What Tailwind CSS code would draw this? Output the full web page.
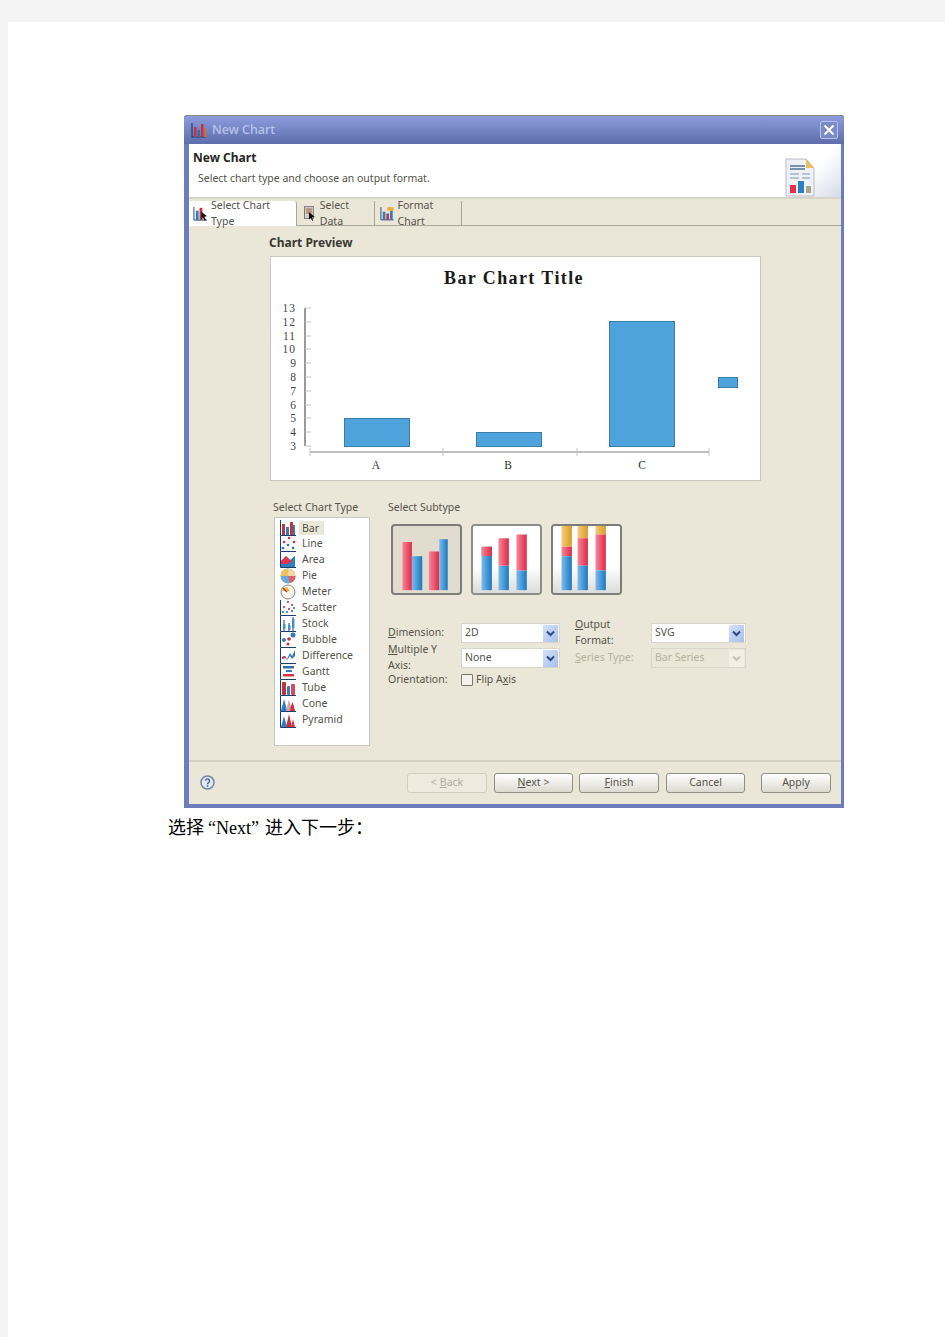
<!DOCTYPE html>
<html lang="zh">
<head>
  <meta charset="UTF-8" />
  <title>New Chart</title>
  <script src="https://cdn.jsdelivr.net/npm/@tailwindcss/browser@4"></script>
</head>
<body class="bg-[#f3f3f3] pl-2 pt-[22px]">
  <div class="bg-white h-[1315px] pl-[160px] pt-[93px] overflow-hidden">

    <!-- dialog -->
    <div class="ml-4 w-[660px] h-[693px] flex flex-col bg-[#6c7cbc] rounded-t-[3px] font-['Noto_Sans',sans-serif] text-[10.5px] text-[#55534a]">
      <div class="h-[29px] flex items-center bg-gradient-to-b from-[#8c9cdc] to-[#5e6eac] border-t border-[#8a8a80] pl-[7px] pr-[6px] rounded-t-[3px]">
        <svg width="16" height="16" viewBox="0 0 16 16">
          <path d="M1 1v14h14" fill="none" stroke="#1d3f70" stroke-width="1.2"/>
          <rect x="3" y="5" width="2.5" height="10" fill="#c8303a"/>
          <rect x="6.5" y="8" width="2.5" height="7" fill="#2f6fb0"/>
          <rect x="10" y="2" width="2.5" height="13" fill="#c8303a"/>
          <rect x="13" y="6" width="2" height="9" fill="#c8703a"/>
        </svg>
        <span class="ml-[5px] text-[12.5px] text-[#b9c4ee] font-medium">New Chart</span>
        <div class="ml-auto w-[18px] h-[18px] rounded-[2px] border border-[#b4c0ea] bg-[#7b8bc8] flex items-center justify-center">
          <svg width="12" height="12" viewBox="0 0 12 12"><path d="M1.5 1.5l9 9M10.5 1.5l-9 9" stroke="#fff" stroke-width="2"/></svg>
        </div>
      </div>

      <div class="flex-1 mx-[5px] mr-[3px] mb-1 flex flex-col bg-[#ebe7d8]">
        <!-- header -->
        <div class="h-[55px] flex bg-white border-b-2 border-[#d8d5c8] relative">
          <div class="pl-1 pt-[6px]">
            <div class="text-[12px] leading-[16px] font-bold text-[#262626]">New Chart</div>
            <div class="ml-[5px] mt-[5px] text-[10.5px] leading-[14px]">Select chart type and choose an output format.</div>
          </div>
          <div class="ml-auto w-[56px] h-[53px] bg-gradient-to-br from-white via-white to-[#d5dbe8] pt-[14px]">
            <svg width="30" height="39" viewBox="0 0 30 39">
              <path d="M1 1h20l8 9v28H1z" fill="#eef1f5" stroke="#b8bcc4"/>
              <path d="M21 1l8 9h-8z" fill="#e8c060"/>
              <path d="M5 8h15M5 11h15" stroke="#55708f" stroke-width="1.4"/>
              <path d="M5 16h9M17 16h8M5 20h9M17 20h8" stroke="#9fb4cc" stroke-width="1.4"/>
              <rect x="5" y="27" width="6" height="8" fill="#e8304a"/>
              <rect x="13" y="23" width="6" height="12" fill="#2c7fc0"/>
              <rect x="21" y="28" width="5" height="7" fill="#a8a48c"/>
            </svg>
          </div>
        </div>

        <!-- tabs -->
        <div class="h-[27px] flex items-end border-b border-[#a8a698]">
          <div class="h-[25px] w-[108px] -mb-px bg-white rounded-t-[3px] border-r border-[#a8a698] flex items-center pl-1 gap-[3px]">
            <svg width="15" height="15" viewBox="0 0 16 16">
              <path d="M1 1v14h14" fill="none" stroke="#1d3f70"/>
              <rect x="3" y="5" width="3" height="10" fill="#2f7fc0"/><rect x="7" y="2" width="3" height="13" fill="#c8303a"/>
              <path d="M9 6l6 5-3 .5 2 3.5-1.500.8-2-3.500-1.500 2z" fill="#111"/>
            </svg>
            <span>Select Chart Type</span>
          </div>
          <div class="h-[25px] w-[78px] -mb-px border-r border-[#a8a698] flex items-center pl-[7px] gap-[4px]">
            <svg width="12" height="15" viewBox="0 0 12 15">
              <rect x="0.500" y="0.500" width="9" height="12" fill="#d8d4c8" stroke="#777"/>
              <path d="M2 3h6M2 5h6M2 7h6" stroke="#9c5a40"/>
              <path d="M5 6l6 5-3 .5 1.500 3-1.200.4-1.500-3-1.800 1.800z" fill="#111"/>
            </svg>
            <span>Select Data</span>
          </div>
          <div class="h-[25px] w-[87px] -mb-px border-r border-[#a8a698] flex items-center pl-[5px] gap-[3px]">
            <svg width="15" height="15" viewBox="0 0 16 16">
              <path d="M1 1v14h14" fill="none" stroke="#1d3f70"/>
              <rect x="3" y="6" width="3" height="9" fill="#2f7fc0"/><rect x="7" y="8" width="3" height="7" fill="#c8303a"/><rect x="11" y="5" width="3" height="10" fill="#2f7fc0"/>
              <rect x="8" y="1" width="7" height="4" fill="#e8b040"/>
            </svg>
            <span>Format Chart</span>
          </div>
        </div>

        <!-- main -->
        <div class="h-[534px] pt-[10px] pl-[80px]">
          <div class="h-[20px] text-[12px] leading-[14px] font-bold text-[#3a3a34]">Chart Preview</div>
          <div class="ml-px w-[491px] h-[225px] bg-white border border-[#c8c8c0]">
            <svg width="489" height="223" viewBox="1 1 489 223" class="block font-['Liberation_Serif',serif]">
              <text x="244" y="28" text-anchor="middle" font-size="18" font-weight="700" letter-spacing="1.400" fill="#1a1a1a">Bar Chart Title</text>
              <path d="M35 52v138" stroke="#707070" stroke-width="1.400"/>
              <path d="M35 52h6M35 66h6M35 80h6M35 93h6M35 107h6M35 121h6M35 135h6M35 149h6M35 162h6M35 176h6M35 190h6" stroke="#c4c4c4"/>
              <g font-size="11.500" fill="#444" text-anchor="end">
                <text x="26" y="56" letter-spacing="1">13</text><text x="26" y="70" letter-spacing="1">12</text><text x="26" y="84" letter-spacing="1">11</text><text x="26" y="97" letter-spacing="1">10</text>
                <text x="26" y="111">9</text><text x="26" y="125">8</text><text x="26" y="139">7</text><text x="26" y="153">6</text><text x="26" y="166">5</text><text x="26" y="180">4</text><text x="26" y="194">3</text>
              </g>
              <path d="M40 196h399" stroke="#a8a8a8" stroke-width="1.500"/>
              <path d="M40 192v8M173 192v8M307 192v8M439 192v8" stroke="#c4c4c4"/>
              <g font-size="11.500" fill="#333" text-anchor="middle">
                <text x="106" y="213">A</text><text x="238" y="213">B</text><text x="372" y="213">C</text>
              </g>
              <g fill="#4fa3dc" stroke="#3a7ea8">
                <rect x="74.500" y="162.500" width="65" height="28"/>
                <rect x="206.500" y="176.500" width="65" height="14"/>
                <rect x="339.500" y="65.500" width="65" height="125"/>
                <rect x="448.500" y="121.500" width="19" height="10"/>
              </g>
            </svg>
          </div>

          <div class="flex mt-[19px]">
            <!-- chart type list -->
            <div class="ml-1 w-[115px]">
              <div class="h-[14px] leading-[14px]">Select Chart Type</div>
              <div class="ml-px mt-[3px] w-[96px] h-[229px] bg-white border border-[#c8c8c0] pl-[5px] pt-[2px]">
                <div class="h-4 flex items-center">
                  <svg width="16" height="16" viewBox="0 0 16 16"><path d="M.5 0v15.500H16" fill="none" stroke="#1d3f70"/><rect x="2" y="4" width="3" height="11" fill="#c8303a"/><rect x="6" y="7" width="3" height="8" fill="#2f7fc0"/><rect x="10" y="2" width="3" height="13" fill="#c8303a"/><rect x="13" y="5" width="2" height="10" fill="#2f7fc0"/></svg>
                  <span class="ml-[3px] bg-[#ebe7d8] pl-[3px] w-[25px] h-[14px] leading-[14px]">Bar</span>
                </div>
                <div class="h-4 flex items-center">
                  <svg width="16" height="16" viewBox="0 0 16 16"><path d="M.5 0v15.500H16" fill="none" stroke="#1d3f70"/><g fill="#c8303a"><circle cx="9" cy="2" r="1.300"/><circle cx="4" cy="6" r="1.300"/><circle cx="14" cy="6" r="1.300"/></g><g fill="#2f6fb0"><circle cx="3" cy="12" r="1.300"/><circle cx="8" cy="9" r="1.300"/><circle cx="13" cy="12" r="1.300"/></g></svg>
                  <span class="ml-[6px]">Line</span>
                </div>
                <div class="h-4 flex items-center">
                  <svg width="16" height="16" viewBox="0 0 16 16"><path d="M.5 0v15.500H16" fill="none" stroke="#1d3f70"/><path d="M1 15V9l5-5 4 4 5-4v11z" fill="#2f7fc0"/><path d="M1 12V9l5-5 4 4 3 0-5 4z" fill="#e0384a"/></svg>
                  <span class="ml-[6px]">Area</span>
                </div>
                <div class="h-4 flex items-center">
                  <svg width="16" height="16" viewBox="0 0 16 16"><circle cx="8" cy="8" r="7.500" fill="#6aa8dc"/><path d="M8 8V.5A7.500 7.500 0 0 0 .5 8z" fill="#f0c060"/><path d="M8 8V.5A7.500 7.500 0 0 1 15.500 8z" fill="#f0d8a0"/><path d="M8 8h7.500A7.500 7.500 0 0 1 10 15z" fill="#e0606a"/></svg>
                  <span class="ml-[6px]">Pie</span>
                </div>
                <div class="h-4 flex items-center">
                  <svg width="16" height="16" viewBox="0 0 16 16"><circle cx="8" cy="8" r="7" fill="#f8f6ee" stroke="#8a8a80"/><path d="M2 7a6 6 0 0 1 5-4l3 4z" fill="#f0b840"/><path d="M3 4l4 4" stroke="#c8303a" stroke-width="1.500"/></svg>
                  <span class="ml-[6px]">Meter</span>
                </div>
                <div class="h-4 flex items-center">
                  <svg width="16" height="16" viewBox="0 0 16 16"><path d="M.5 0v15.500H16" fill="none" stroke="#1d3f70"/><g fill="#c8303a"><circle cx="8" cy="2" r="1.100"/><circle cx="4" cy="7" r="1.100"/><circle cx="12" cy="5" r="1.100"/><circle cx="9" cy="9" r="1.100"/></g><g fill="#2f6fb0"><circle cx="3" cy="12" r="1.100"/><circle cx="7" cy="12" r="1.100"/><circle cx="12" cy="11" r="1.100"/><circle cx="14" cy="8" r="1.100"/></g></svg>
                  <span class="ml-[6px]">Scatter</span>
                </div>
                <div class="h-4 flex items-center">
                  <svg width="16" height="16" viewBox="0 0 16 16"><path d="M.5 0v15.500H16" fill="none" stroke="#1d3f70"/><path d="M4 4v11M9 7v8M13 1v14" stroke="#1d3f70"/><rect x="3" y="8" width="2.500" height="5" fill="#4a90d0"/><rect x="8" y="9" width="2.500" height="5" fill="#4a90d0"/><rect x="12" y="3" width="2.500" height="9" fill="#4a90d0"/></svg>
                  <span class="ml-[6px]">Stock</span>
                </div>
                <div class="h-4 flex items-center">
                  <svg width="16" height="16" viewBox="0 0 16 16"><path d="M.5 0v15.500H16" fill="none" stroke="#1d3f70"/><circle cx="13" cy="3" r="2.500" fill="#2f7fc0"/><circle cx="4" cy="8" r="2" fill="#2f7fc0"/><circle cx="9" cy="7" r="1.800" fill="#c8303a"/><circle cx="8" cy="12" r="1.500" fill="#c8303a"/></svg>
                  <span class="ml-[6px]">Bubble</span>
                </div>
                <div class="h-4 flex items-center">
                  <svg width="16" height="16" viewBox="0 0 16 16"><path d="M.5 0v15.500H16" fill="none" stroke="#1d3f70"/><path d="M2 9l3-1 2 3 3-6 2 3 3-6v6l-3 3-2-3-3 4-2-3-3 1z" fill="#2f7fc0"/><path d="M2 9l3-1 1 2-4 1z" fill="#c8303a"/></svg>
                  <span class="ml-[6px]">Difference</span>
                </div>
                <div class="h-4 flex items-center">
                  <svg width="16" height="16" viewBox="0 0 16 16"><path d="M.5 0v15.500H16" fill="none" stroke="#1d3f70"/><rect x="3" y="2" width="11" height="2.500" fill="#2f6fb0"/><rect x="6" y="6" width="6" height="2" fill="#2f7fc0"/><rect x="3" y="10" width="11" height="2.500" fill="#d8384a"/></svg>
                  <span class="ml-[6px]">Gantt</span>
                </div>
                <div class="h-4 flex items-center">
                  <svg width="16" height="16" viewBox="0 0 16 16"><path d="M.5 0v15.500H16" fill="none" stroke="#1d3f70"/><rect x="2" y="2" width="4" height="13" rx="1" fill="#c8303a"/><rect x="7" y="6" width="3" height="9" rx="1" fill="#2f7fc0"/><rect x="11" y="4" width="4" height="11" rx="1" fill="#d8485a"/></svg>
                  <span class="ml-[6px]">Tube</span>
                </div>
                <div class="h-4 flex items-center">
                  <svg width="16" height="16" viewBox="0 0 16 16"><path d="M.5 0v15.500H16" fill="none" stroke="#1d3f70"/><path d="M1 15q2-8 3-12 2 6 3 12z" fill="#2f7fc0"/><path d="M6 15q2-8 3-11 2 6 3 11z" fill="#d8a0a8"/><path d="M10 15q1-6 2.500-9 1.500 4 2.500 9z" fill="#c8303a"/></svg>
                  <span class="ml-[6px]">Cone</span>
                </div>
                <div class="h-4 flex items-center">
                  <svg width="16" height="16" viewBox="0 0 16 16"><path d="M.5 0v15.500H16" fill="none" stroke="#1d3f70"/><path d="M1 15l3-11 3 11z" fill="#2f7fc0"/><path d="M6 15l3-13 3 13z" fill="#c8303a"/><path d="M11 15l2-8 2 8z" fill="#d8384a"/></svg>
                  <span class="ml-[6px]">Pyramid</span>
                </div>
              </div>
            </div>

            <!-- subtype and options -->
            <div>
              <div class="h-[14px] leading-[14px]">Select Subtype</div>
              <div class="ml-[3px] mt-[10px] flex gap-[9px]">
                <svg width="71" height="71" viewBox="0 0 71 71" class="rounded-[4px] border-2 border-[#7c7c78] bg-[#e2dccf]">
                  <defs>
                    <linearGradient id="red"><stop offset="0" stop-color="#f48a9a"/><stop offset="1" stop-color="#e02844"/></linearGradient>
                    <linearGradient id="blue"><stop offset="0" stop-color="#7cbcec"/><stop offset="1" stop-color="#1c78c0"/></linearGradient>
                    <linearGradient id="gold"><stop offset="0" stop-color="#f4cc78"/><stop offset="1" stop-color="#d89c28"/></linearGradient>
                    <linearGradient id="sheen" x1="0" y1="0" x2="0" y2="1"><stop offset="0" stop-color="#ffffff"/><stop offset="0.600" stop-color="#ffffff"/><stop offset="1" stop-color="#dcdcd8"/></linearGradient>
                  </defs>
                  <rect x="10" y="17" width="10" height="51" fill="url(#red)"/>
                  <rect x="20" y="32" width="11" height="36" fill="url(#blue)"/>
                  <rect x="38" y="27" width="11" height="41" fill="url(#red)"/>
                  <rect x="49" y="14" width="9" height="54" fill="url(#blue)"/>
                </svg>
                <svg width="71" height="71" viewBox="0 0 71 71" class="rounded-[4px] border-2 border-[#8c8c88]">
                  <rect width="71" height="71" fill="url(#sheen)"/>
                  <rect x="9" y="22" width="11" height="46" fill="url(#blue)"/><rect x="9" y="22" width="11" height="10" fill="url(#red)"/>
                  <rect x="27" y="42" width="11" height="26" fill="url(#blue)"/><rect x="27" y="13" width="11" height="29" fill="url(#red)"/>
                  <rect x="46" y="47" width="11" height="21" fill="url(#blue)"/><rect x="46" y="9" width="11" height="38" fill="url(#red)"/>
                </svg>
                <svg width="71" height="71" viewBox="0 0 71 71" class="rounded-[4px] border-2 border-[#7c7c78]">
                  <rect width="71" height="71" fill="url(#sheen)"/>
                  <rect x="9" y="0" width="11" height="22" fill="url(#gold)"/><rect x="9" y="22" width="11" height="10" fill="url(#red)"/><rect x="9" y="32" width="11" height="36" fill="url(#blue)"/>
                  <rect x="26" y="0" width="11" height="13" fill="url(#gold)"/><rect x="26" y="13" width="11" height="29" fill="url(#red)"/><rect x="26" y="42" width="11" height="26" fill="url(#blue)"/>
                  <rect x="45" y="0" width="11" height="9" fill="url(#gold)"/><rect x="45" y="9" width="11" height="38" fill="url(#red)"/><rect x="45" y="47" width="11" height="21" fill="url(#blue)"/>
                </svg>
              </div>

              <div class="mt-[28px] flex items-center h-5">
                <span class="w-[73px]"><u>D</u>imension:</span>
                <div class="w-[99px] h-5 bg-white border border-[#d8d6cc] flex items-center pl-[3px]">2D<span class="ml-auto mr-px w-[15px] h-[17px] bg-gradient-to-br from-[#d4e0f8] to-[#a8c0ec] flex items-center justify-center"><svg width="9" height="7" viewBox="0 0 9 7"><path d="M1 1.500l3.500 3.500L8 1.500" fill="none" stroke="#2c4a80" stroke-width="2"/></svg></span></div>
                <span class="ml-[15px] w-[76px]"><u>O</u>utput Format:</span>
                <div class="w-[95px] h-5 bg-white border border-[#d8d6cc] flex items-center pl-[3px]">SVG<span class="ml-auto mr-px w-[15px] h-[17px] bg-gradient-to-br from-[#d4e0f8] to-[#a8c0ec] flex items-center justify-center"><svg width="9" height="7" viewBox="0 0 9 7"><path d="M1 1.500l3.500 3.500L8 1.500" fill="none" stroke="#2c4a80" stroke-width="2"/></svg></span></div>
              </div>
              <div class="mt-[5px] flex items-center h-5">
                <span class="w-[73px]"><u>M</u>ultiple Y Axis:</span>
                <div class="w-[99px] h-5 bg-white border border-[#d8d6cc] flex items-center pl-[3px]">None<span class="ml-auto mr-px w-[15px] h-[17px] bg-gradient-to-br from-[#d4e0f8] to-[#a8c0ec] flex items-center justify-center"><svg width="9" height="7" viewBox="0 0 9 7"><path d="M1 1.500l3.500 3.500L8 1.500" fill="none" stroke="#2c4a80" stroke-width="2"/></svg></span></div>
                <span class="ml-[15px] w-[76px] text-[#b4b1a2]"><u>S</u>eries Type:</span>
                <div class="w-[95px] h-5 bg-[#ebe7d8] border border-[#d8d6cc] flex items-center pl-[3px] text-[#b4b1a2]">Bar Series<span class="ml-auto mr-px w-[15px] h-[17px] bg-[#f2efe4] flex items-center justify-center"><svg width="9" height="7" viewBox="0 0 9 7"><path d="M1 1.500l3.500 3.500L8 1.500" fill="none" stroke="#c4c2b6" stroke-width="2"/></svg></span></div>
              </div>
              <div class="mt-[4px] flex items-center h-4">
                <span class="w-[73px]">Orientation:</span>
                <span class="w-3 h-3 bg-[#f4f2ea] border border-[#77776f] rounded-[1px]"></span>
                <span class="ml-[3px]">Flip A<u>x</u>is</span>
              </div>
            </div>
          </div>
        </div>

        <!-- footer -->
        <div class="flex-1 border-t-2 border-[#d4d1c2] pt-[11px] pr-[10px] flex items-start">
          <svg width="15" height="15" viewBox="0 0 15 15" class="ml-[11px] mt-[2px]">
            <circle cx="7.500" cy="7.500" r="6.500" fill="#e4e8f2" stroke="#7088a8" stroke-width="1.500"/>
            <path d="M5.500 5.800a2 2 0 1 1 3 1.800c-.8.5-1 .9-1 1.700" fill="none" stroke="#46628a" stroke-width="1.400"/>
            <rect x="6.800" y="10.200" width="1.500" height="1.500" fill="#46628a"/>
          </svg>
          <div class="ml-auto flex">
            <div class="w-[80px] h-5 rounded-[3px] border border-[#d0cebf] bg-[#eeeade] text-[#b0ae9f] flex items-center justify-center">&lt; <u class="ml-[3px]">B</u>ack</div>
            <div class="ml-[7px] w-[79px] h-5 rounded-[3px] border border-[#8e8e84] bg-gradient-to-b from-white to-[#dcdad0] flex items-center justify-center"><u>N</u>ext &gt;</div>
            <div class="ml-[6px] w-[80px] h-5 rounded-[3px] border border-[#8e8e84] bg-gradient-to-b from-white to-[#dcdad0] flex items-center justify-center"><u>F</u>inish</div>
            <div class="ml-[7px] w-[79px] h-5 rounded-[3px] border border-[#8e8e84] bg-gradient-to-b from-white to-[#dcdad0] flex items-center justify-center">Cancel</div>
            <div class="ml-4 w-[70px] h-5 rounded-[3px] border border-[#8e8e84] bg-gradient-to-b from-white to-[#dcdad0] flex items-center justify-center">Apply</div>
          </div>
        </div>
      </div>
    </div>

    <p class="mt-[8px] text-[18px] leading-[24px] text-black font-['Liberation_Serif','Noto_Sans_CJK_SC',serif]">选择<span class="ml-[4px] mr-[6px]">“Next”</span>进入下一步：</p>
  </div>
</body>
</html>
